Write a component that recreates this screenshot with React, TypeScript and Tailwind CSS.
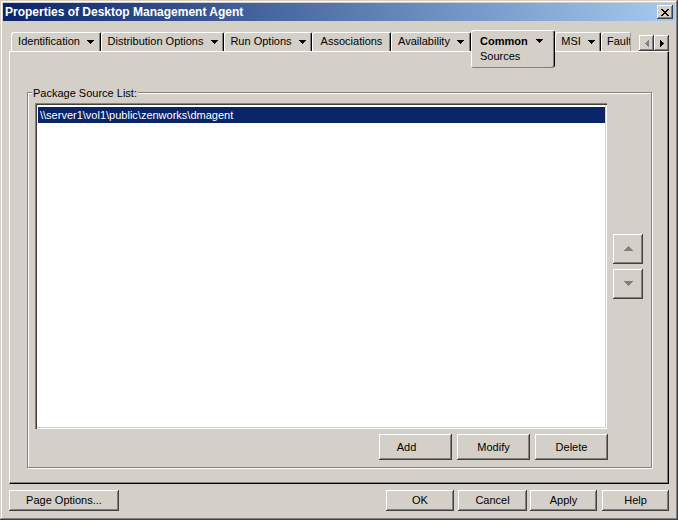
import React from "react";

const btn =
  "bg-[#d4d0c8] text-black flex items-center justify-center shadow-[inset_-1px_-1px_0_#404040,inset_1px_1px_0_#ffffff,inset_-2px_-2px_0_#808080]";

function Down({ c = "#000" }: { c?: string }) {
  return (
    <svg width="7" height="4" viewBox="0 0 7 4" shapeRendering="crispEdges">
      <path d="M0 0h7v1H0zM1 1h5v1H1zM2 2h3v1H2zM3 3h1v1H3z" fill={c} />
    </svg>
  );
}

function BigUp({ c }: { c: string }) {
  return (
    <svg width="9" height="5" viewBox="0 0 9 5" shapeRendering="crispEdges">
      <path d="M4 0h1v1H4zM3 1h3v1H3zM2 2h5v1H2zM1 3h7v1H1zM0 4h9v1H0z" fill={c} />
    </svg>
  );
}

function BigDown({ c }: { c: string }) {
  return (
    <svg width="9" height="5" viewBox="0 0 9 5" shapeRendering="crispEdges">
      <path d="M0 0h9v1H0zM1 1h7v1H1zM2 2h5v1H2zM3 3h3v1H3zM4 4h1v1H4z" fill={c} />
    </svg>
  );
}

function Left({ c }: { c: string }) {
  return (
    <svg width="4" height="7" viewBox="0 0 4 7" shapeRendering="crispEdges">
      <path d="M3 0h1v7H3zM2 1h1v5H2zM1 2h1v3H1zM0 3h1v1H0z" fill={c} />
    </svg>
  );
}

function Right({ c }: { c: string }) {
  return (
    <svg width="4" height="7" viewBox="0 0 4 7" shapeRendering="crispEdges">
      <path d="M0 0h1v7H0zM1 1h1v5H1zM2 2h1v3H2zM3 3h1v1H3z" fill={c} />
    </svg>
  );
}

const tabCls =
  "mt-[2px] h-[19px] pb-[1px] flex items-center justify-center gap-[7px] border-l border-t border-r border-l-white border-t-white border-r-black rounded-tl-[3px] rounded-tr-[2px] shadow-[inset_-1px_0_0_#808080] whitespace-nowrap";

function Tab({ label, w, arrow = true }: { label: string; w: string; arrow?: boolean }) {
  return (
    <div className={`${tabCls} ${w}`}>
      <span className="leading-none">{label}</span>
      {arrow && <Down />}
    </div>
  );
}

export default function App() {
  return (
    <div className="w-[678px] h-[520px] bg-[#d4d0c8] flex flex-col p-[3px] overflow-hidden text-[11px] text-black font-['Liberation_Sans',Arial,sans-serif] shadow-[inset_-1px_-1px_0_#404040,inset_1px_1px_0_#d4d0c8,inset_-2px_-2px_0_#808080,inset_2px_2px_0_#ffffff]">
      {/* Title bar */}
      <div className="h-[18px] shrink-0 flex items-center pl-[2px] pr-[2px] bg-[linear-gradient(to_right,#0a246a,#a6caf0)]">
        <span className="text-white font-bold text-[12px] leading-none">
          Properties of Desktop Management Agent
        </span>
        <div className={`ml-auto w-[16px] h-[14px] ${btn}`}>
          <svg width="8" height="7" viewBox="0 0 8 7" shapeRendering="crispEdges">
            <path
              d="M0 0h2v1H0zM6 0h2v1H6zM1 1h2v1H1zM5 1h2v1H5zM2 2h4v1H2zM3 3h2v1H3zM2 4h4v1H2zM1 5h2v1H1zM5 5h2v1H5zM0 6h2v1H0zM6 6h2v1H6z"
              fill="#000"
            />
          </svg>
        </div>
      </div>

      {/* Tab row */}
      <div className="mt-[9px] ml-[8px] h-[21px] shrink-0 flex items-start relative z-10">
        <Tab label="Identification" w="w-[90px]" />
        <Tab label="Distribution Options" w="w-[123px]" />
        <Tab label="Run Options" w="w-[88px]" />
        <Tab label="Associations" w="w-[79px]" arrow={false} />
        <Tab label="Availability" w="w-[80px]" />
        <div className="w-[84px] h-[38px] flex flex-col items-start pl-[8px] pt-[3px] bg-[#d4d0c8] border border-l-white border-t-white border-r-black border-b-[#808080] rounded-[3px] shadow-[inset_-1px_0_0_#808080]">
          <div className="flex items-center gap-[8px] h-[14px]">
            <span className="font-bold leading-none">Common</span>
            <Down />
          </div>
          <div className="h-[14px] mt-[1px] flex items-center leading-none">Sources</div>
        </div>
        <Tab label="MSI" w="w-[46px]" />
        <div className="mt-[2px] h-[19px] pb-[1px] w-[30px] overflow-hidden flex items-center pl-[5px] border-l border-t border-r border-l-white border-t-white border-r-[#a0a0a0] rounded-tl-[3px] whitespace-nowrap">
          <span className="leading-none">Fault</span>
        </div>
        <div className="ml-[8px] mt-[5px] flex">
          <div className={`w-[15px] h-[16px] ${btn}`}>
            <Left c="#808080" />
          </div>
          <div className={`w-[15px] h-[16px] ${btn}`}>
            <Right c="#000" />
          </div>
        </div>
      </div>

      {/* Panel */}
      <div className="ml-[6px] w-[660px] h-[433px] shrink-0 flex flex-col border border-l-white border-t-white border-r-black border-b-black shadow-[inset_-1px_-1px_0_#808080]">
        <div className="ml-[17px] mt-[40px] w-[625px] h-[376px] relative border border-[#808080] shadow-[1px_1px_0_#ffffff,inset_1px_1px_0_#ffffff] flex flex-col pl-[7px] pt-[10px]">
          <span className="absolute left-[4px] top-[-7px] px-[1px] bg-[#d4d0c8] leading-[14px]">
            Package Source List:
          </span>
          <div className="flex items-center">
            <div className="w-[572px] h-[326px] bg-white p-[2px] shadow-[inset_1px_1px_0_#808080,inset_2px_2px_0_#404040,inset_-1px_-1px_0_#ffffff,inset_-2px_-2px_0_#d4d0c8]">
              <div className="mt-[2px] ml-[1px] h-[16px] bg-[#0a246a] text-white flex items-center pl-[2px] leading-none">
                \\server1\vol1\public\zenworks\dmagent
              </div>
            </div>
            <div className="ml-[6px] flex flex-col gap-[5px]">
              <div className={`w-[30px] h-[30px] ${btn}`}>
                <BigUp c="#808080" />
              </div>
              <div className={`w-[30px] h-[30px] ${btn}`}>
                <BigDown c="#808080" />
              </div>
            </div>
          </div>
          <div className="mt-[5px] w-[573px] flex justify-end gap-[5px]">
            <div className={`w-[73px] h-[26px] pr-[18px] ${btn}`}>Add</div>
            <div className={`w-[73px] h-[26px] ${btn}`}>Modify</div>
            <div className={`w-[73px] h-[26px] ${btn}`}>Delete</div>
          </div>
        </div>
      </div>

      {/* Bottom buttons */}
      <div className="ml-[6px] w-[660px] mt-[6px] flex">
        <div className={`w-[110px] h-[21px] ${btn}`}>Page Options...</div>
        <div className={`ml-auto w-[68px] h-[21px] ${btn}`}>OK</div>
        <div className={`ml-[4px] w-[69px] h-[21px] ${btn}`}>Cancel</div>
        <div className={`ml-[3px] w-[67px] h-[21px] ${btn}`}>Apply</div>
        <div className={`ml-[5px] w-[67px] h-[21px] ${btn}`}>Help</div>
      </div>
    </div>
  );
}
